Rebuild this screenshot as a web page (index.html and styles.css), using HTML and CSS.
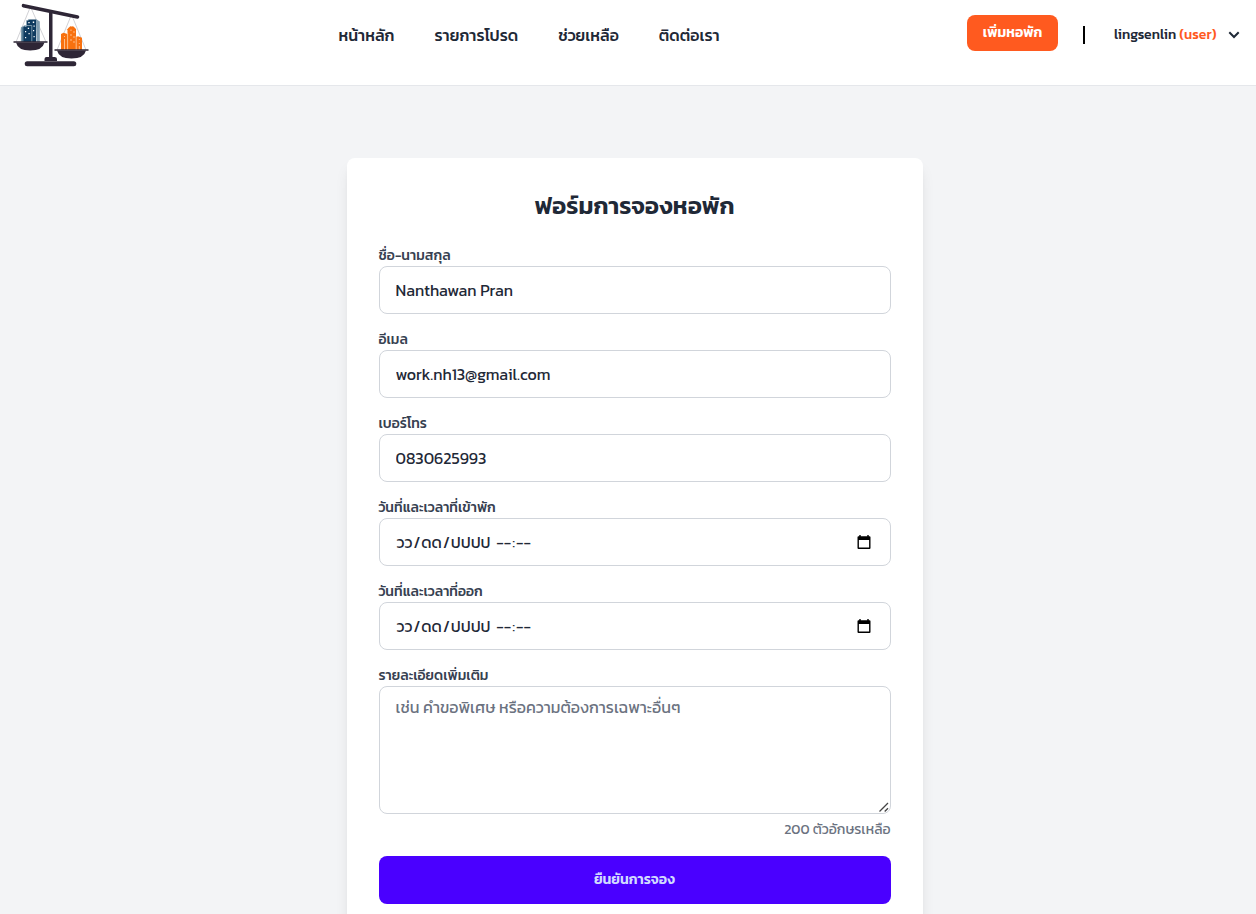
FILE: index.html
```html
<!DOCTYPE html>
<html lang="th">
<head>
<meta charset="utf-8">
<title>ฟอร์มการจองหอพัก</title>
<link rel="stylesheet" href="styles.css">
</head>
<body>
<header class="topbar">
  <a class="logo" href="#">
    <svg width="80" height="68" viewBox="12 2 80 68">
      <g fill="none" stroke="#d2d2d6" stroke-width="1">
        <path d="M29.500 9 16 42M31.500 9 46 42M70.500 17 57 50M72.500 17 86 50"/>
      </g>
      <path fill="#0d3a5f" d="M26.500 20.500 29 19.500h7V42h-9.500z"/>
      <path fill="#7f9db0" d="M36 19l3.800 2.500V42H36.500z"/>
      <path fill="#527a94" d="M21 27.500l4-2V42h-4z"/>
      <path fill="#0d3a5f" d="M23.500 26.500h8V42h-8z"/>
      <path fill="none" stroke="#8fa8b8" stroke-width=".8" d="M21.300 42V27.500l3.700-2h6.800V42M26.500 25v-4l3-1.500"/>
      <path fill="#fff" d="M28.300 22h1.400v1.300h-1.400zM32.800 21.600h1.400v1.300h-1.400zM27.800 27.800h1.300v1.300h-1.300zM33.500 25.500h1.200v1.200h-1.200zM25 31h1.200v1.200H25zM28.500 33h1.200v1.200h-1.200zM25 37h1.200v1.200H25zM33 30h1.200v1.200H33zM33.500 36h1.200v1.200h-1.200z"/>
      <path fill="#f8710f" d="M61 50V34l2.500-1.200 4 1.200v-5l2.500-2.500h3.500l2.500 2.500v8l2-.8 4 1.500V50z"/>
      <path fill="none" stroke="#ffd0a6" stroke-width=".8" d="M64.500 36v1m0 2v11M67.600 33v17M71 29.500v1.500m0 3v2m0 3v2M74 31v2m0 3v2m0 3v2M76.200 36v14M79.300 39v1m0 3v1m0 2v4"/>
      <path fill="none" stroke="#f8710f" stroke-width="1" stroke-dasharray="1 1" d="M67 30q4.500-6 9 0"/>
      <path stroke="#2e2636" stroke-width="3.600" stroke-linecap="round" d="M23.500 5.700 77.500 17"/>
      <path fill="#2e2636" d="M49 11h3.500v48H49zM44.500 61v-2q0-2 2-2h8q2.500 0 2.500 2v2zM16 42.500h28.500q-2 8-14.300 8T16 42.500zM57 50.500h29q-2 8-14.500 8T57 50.500z"/>
      <path stroke="#2e2636" stroke-width="1.300" d="M13.500 42h34M54.500 50h34"/>
      <rect x="24.700" y="61.300" width="51.600" height="5" rx="2.500" fill="#2e2636"/>
    </svg>
  </a>
  <nav class="nav">
    <a href="#">หน้าหลัก</a>
    <a href="#">รายการโปรด</a>
    <a href="#">ช่วยเหลือ</a>
    <a href="#">ติดต่อเรา</a>
  </nav>
  <div class="account">
    <button class="add">เพิ่มหอพัก</button>
    <span class="divider"></span>
    <span class="user">lingsenlin <b>(user)</b></span>
    <svg class="chevron" width="12" height="8" viewBox="0 0 12 8"><path d="M1.300 1.300 6 6l4.700-4.700" fill="none" stroke="#1f2937" stroke-width="2"/></svg>
  </div>
</header>
<main class="page">
  <form class="card">
    <h1>ฟอร์มการจองหอพัก</h1>
    <label class="field"><span class="label">ชื่อ-นามสกุล</span><input class="control name" value="Nanthawan Pran"></label>
    <label class="field"><span class="label">อีเมล</span><input class="control email" value="work.nh13@gmail.com"></label>
    <label class="field"><span class="label">เบอร์โทร</span><input class="control phone" value="0830625993"></label>
    <div class="field"><span class="label">วันที่และเวลาที่เข้าพัก</span>
      <div class="control date"><span class="parts"><i>วว</i>/<i>ดด</i>/<i>ปปปป</i> <i>--</i>:<i>--</i></span><svg width="14" height="16" viewBox="0 0 14 16"><path fill="#000" fill-rule="evenodd" d="M2.300 1h1.400v1.300h6.600V1h1.400v1.300h.8q1 0 1 1V14q0 1-1 1h-11q-1 0-1-1V3.300q0-1 1-1h.8zM1.900 6v7.600h10.200V6z"/></svg></div></div>
    <div class="field"><span class="label">วันที่และเวลาที่ออก</span>
      <div class="control date"><span class="parts"><i>วว</i>/<i>ดด</i>/<i>ปปปป</i> <i>--</i>:<i>--</i></span><svg width="14" height="16" viewBox="0 0 14 16"><path fill="#000" fill-rule="evenodd" d="M2.300 1h1.400v1.300h6.600V1h1.400v1.300h.8q1 0 1 1V14q0 1-1 1h-11q-1 0-1-1V3.300q0-1 1-1h.8zM1.900 6v7.600h10.200V6z"/></svg></div></div>
    <label class="field last"><span class="label">รายละเอียดเพิ่มเติม</span><textarea class="control area" placeholder="เช่น คำขอพิเศษ หรือความต้องการเฉพาะอื่นๆ"></textarea>
      <svg class="grip" width="10" height="10" viewBox="0 0 10 10"><path d="M.5 9.500l8.500-8.500M5.700 9.500 9 6.200" fill="none" stroke="#444" stroke-width="1.300"/></svg></label>
    <p class="count">200 ตัวอักษรเหลือ</p>
    <button class="submit" type="button">ยืนยันการจอง</button>
  </form>
</main>
</body>
</html>
```
FILE: styles.css
```css
* { box-sizing: border-box; }
body { margin: 0; height: 914px; overflow: hidden; background: #f3f4f6; color: #1f2937; font-family: Kanit, "Noto Sans Thai", "Noto Sans", "Open Sans", sans-serif; font-size: 16px; }
button, input, textarea { font: inherit; color: inherit; }
.topbar { display: flex; height: 86px; background: #fff; border-bottom: 1px solid #e5e7eb; }
.logo { width: 338.4px; padding: 2px 0 0 12px; }
.nav { display: flex; gap: 40px; padding-top: 23px; flex: 1; }
.nav a { color: #1f2937; text-decoration: none; font-weight: 500; line-height: 24px; white-space: nowrap; }
.account { display: flex; align-items: flex-start; padding: 15px 16px 0 0; font-size: 14px; font-weight: 500; white-space: nowrap; }
.add { width: 91px; height: 36px; padding: 0 0 2px; border: 0; border-radius: 8px; background: #ff5a1f; color: #fff; font-weight: 600; white-space: nowrap; }
.divider { width: 2px; height: 18px; margin: 11px 29px 0 25px; background: #000; }
.user { line-height: 20px; margin-top: 10px; width: 103px; letter-spacing: .04px; }
.user b { color: #ff5a1f; font-weight: 500; }
.chevron { margin: 16px 0 0 11px; }
.page { padding: 72px 0 0 346.5px; }
.card { width: 576px; padding: 32px; background: #fff; border-radius: 8px; box-shadow: 0 10px 15px -3px rgba(0,0,0,.1), 0 4px 6px -4px rgba(0,0,0,.1); }
h1 { margin: 0 0 24px; font-size: 24px; line-height: 32px; font-weight: 600; text-align: center; white-space: nowrap; }
.field { display: block; position: relative; margin-bottom: 16px; }
.label { display: block; height: 20px; font-size: 14px; line-height: 20px; font-weight: 500; color: #374151; white-space: nowrap; }
.control { display: block; width: 100%; height: 48px; padding: 0 16px; border: 1px solid #d1d5db; border-radius: 8px; background: #fff; outline: 0; }
.date { display: flex; align-items: center; justify-content: space-between; padding-right: 19px; }
.parts { white-space: pre; }
.parts i { font-style: normal; padding: 0 1px; }
.area { height: 128px; padding: 8px 16px; line-height: 24px; resize: none; }
.area::placeholder { color: #6b7280; }
.grip { position: absolute; right: 2px; bottom: 2px; }
.last { margin-bottom: 6px; }
.count { margin: 0 0 16px; text-align: right; font-size: 14px; line-height: 20px; color: #6b7280; }
.submit { display: block; width: 100%; height: 48px; border: 0; border-radius: 8px; padding: 0 0 2px; background: #4a00ff; color: #d1dbff; font-size: 14px; font-weight: 600; }
```
